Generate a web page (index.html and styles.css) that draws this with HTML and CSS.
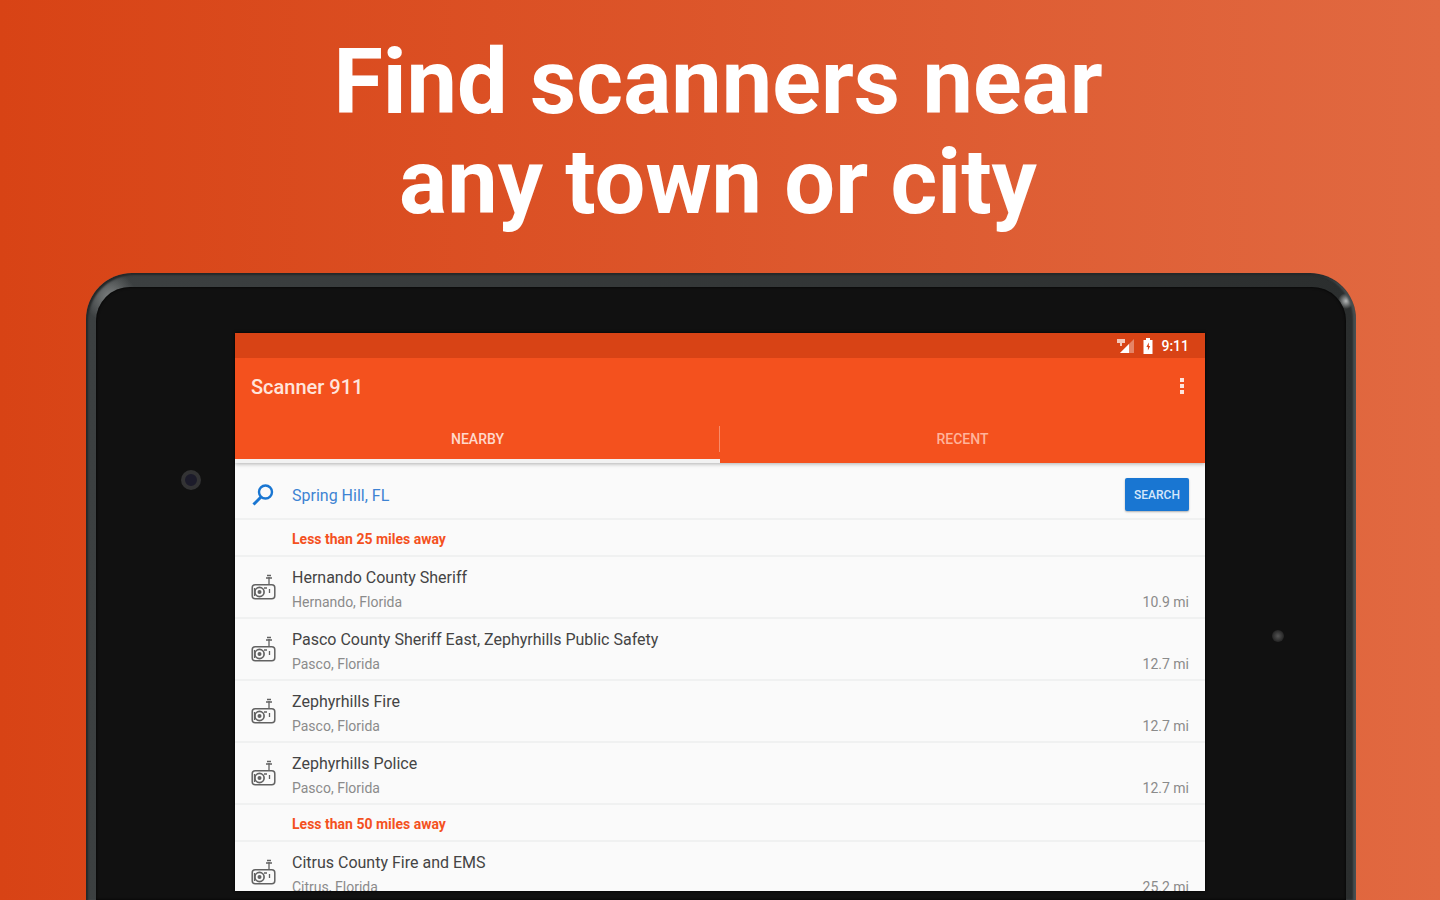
FILE: index.html
```html
<!DOCTYPE html>
<html lang="en">
<head>
  <meta charset="UTF-8" />
  <meta name="viewport" content="width=device-width, initial-scale=1" />
  <title>Scanner 911</title>
  <link rel="stylesheet" href="styles.css">
</head>
<body>
  <!-- shared radio icon -->
  <svg class="defs" aria-hidden="true">
    <symbol id="radio" viewBox="0 0 26 28">
      <path d="M18 10V3M15 4h6M16 1.500h4" fill="none" stroke="currentColor" stroke-width="1.3"/>
      <rect x="1.2" y="10.7" width="22.6" height="14" rx="3" fill="none" stroke="currentColor" stroke-width="1.5"/>
      <circle cx="8.500" cy="18" r="4.6" fill="none" stroke="currentColor" stroke-width="1.7"/>
      <circle cx="8.500" cy="18" r="2" fill="currentColor"/>
      <path d="M3.500 14v8M18.500 15v4M13 14h3" fill="none" stroke="currentColor" stroke-width="1.3"/>
    </symbol>
  </svg>

  <h1 class="headline">Find scanners near<br>any town or city</h1>

  <div class="tablet">
    <div class="glass">
      <div class="side side-left"><span class="camera"></span></div>

      <main class="screen">
        <header class="app-header">
          <div class="status-bar">
            <svg width="18" height="16" viewBox="0 0 18 16" aria-hidden="true">
              <path d="M0 1h8v4H5v3H3V5H0z" fill="#fff" opacity=".7"/>
              <path d="M17 1v14H3z" fill="#fff" opacity=".35"/>
              <path d="M12 6v9H3z" fill="#fff"/>
            </svg>
            <svg width="10" height="16" viewBox="0 0 10 16" aria-hidden="true">
              <path d="M3 0h4v2h2.500v14H.5V2H3z" fill="#fff"/>
              <path d="M5.800 4.500L3.400 9h1.500v3.500L7.200 8H5.800z" fill="#d84315"/>
            </svg>
            <span>9:11</span>
          </div>
          <div class="toolbar">
            <h2>Scanner 911</h2>
            <button class="menu-btn" aria-label="More options">
              <svg width="6" height="18" viewBox="0 0 6 18" aria-hidden="true">
                <path d="M1 0h4v4H1zM1 6h4v4H1zM1 12h4v4H1z" fill="#fff" opacity=".85"/>
              </svg>
            </button>
          </div>
          <nav class="tabs">
            <button class="tab active">NEARBY</button>
            <button class="tab">RECENT</button>
          </nav>
        </header>

        <form class="search">
          <label for="place" aria-label="Location">
            <svg width="24" height="24" viewBox="0 0 24 24" aria-hidden="true">
              <circle cx="14.500" cy="9" r="6.500" fill="none" stroke="#1976d2" stroke-width="2.400"/>
              <path d="M10 14l-7.500 7.500" stroke="#1976d2" stroke-width="3"/>
            </svg>
          </label>
          <input type="text" id="place" value="Spring Hill, FL" />
          <button type="button">SEARCH</button>
        </form>

        <section>
          <h3>Less than 25 miles away</h3>
          <ul>
            <li>
              <svg class="icon" aria-hidden="true"><use href="#radio"/></svg>
              <div class="info"><p class="name">Hernando County Sheriff</p><p>Hernando, Florida</p></div>
              <span class="distance">10.9 mi</span>
            </li>
            <li>
              <svg class="icon" aria-hidden="true"><use href="#radio"/></svg>
              <div class="info"><p class="name">Pasco County Sheriff East, Zephyrhills Public Safety</p><p>Pasco, Florida</p></div>
              <span class="distance">12.7 mi</span>
            </li>
            <li>
              <svg class="icon" aria-hidden="true"><use href="#radio"/></svg>
              <div class="info"><p class="name">Zephyrhills Fire</p><p>Pasco, Florida</p></div>
              <span class="distance">12.7 mi</span>
            </li>
            <li>
              <svg class="icon" aria-hidden="true"><use href="#radio"/></svg>
              <div class="info"><p class="name">Zephyrhills Police</p><p>Pasco, Florida</p></div>
              <span class="distance">12.7 mi</span>
            </li>
          </ul>
        </section>

        <section>
          <h3>Less than 50 miles away</h3>
          <ul>
            <li>
              <svg class="icon" aria-hidden="true"><use href="#radio"/></svg>
              <div class="info"><p class="name">Citrus County Fire and EMS</p><p>Citrus, Florida</p></div>
              <span class="distance">25.2 mi</span>
            </li>
          </ul>
        </section>
      </main>

      <div class="side side-right"><span class="sensor"></span></div>
    </div>
  </div>
</body>
</html>
```
FILE: styles.css
```css
* { box-sizing: border-box; }
body {
  margin: 0; height: 100vh; overflow: hidden;
  display: flex; flex-direction: column;
  font-family: Roboto, sans-serif;
  background: linear-gradient(to right, #d84315, #e16941);
}
h1, h2, h3, p, ul { margin: 0; padding: 0; }
ul { list-style: none; }
button, input { font-family: inherit; border: none; padding: 0; background: none; }
button { cursor: pointer; }
.defs { position: absolute; width: 0; height: 0; }

.headline {
  padding: 33px 4px 40px 0;
  color: white; text-align: center;
  font-size: 90px; line-height: 100px; font-weight: bold;
}

/* tablet frame */
.tablet {
  flex: 1; min-height: 0; display: flex;
  margin: 0 84px 0 86px; padding: 14px 10px 0;
  border-radius: 46px 46px 0 0;
  background:
    radial-gradient(circle at 24px 24px, #7d8080, transparent 26px),
    radial-gradient(circle at calc(100% - 10px) 28px, #b5b8b8, transparent 8px),
    linear-gradient(to right, #3c4041, #2b2e2e);
  box-shadow: inset 2px 2px 2px #232728, inset -3px 0 2px #484f51;
}
.glass {
  flex: 1; min-width: 0; display: flex;
  padding: 46px 0 9px;
  border-radius: 34px 34px 0 0;
  background: #111;
  box-shadow: inset 0 0 3px #000;
}
.side { flex: none; display: flex; justify-content: center; align-items: flex-start; }
.side-left { width: 139px; }
.side-right { width: 141px; }
.camera {
  width: 20px; height: 20px; margin: 137px 0 0 50px;
  border: 4px solid #333334; border-radius: 50%;
  background: #1c1b2a;
}
.sensor {
  width: 12px; height: 12px; margin: 297px 0 0 4px;
  border-radius: 50%;
  background: radial-gradient(#555, #111);
}

.screen {
  flex: 1; min-width: 0; overflow: hidden;
  background: #fafafa; box-shadow: 0 0 3px #000;
}
.app-header {
  position: relative;
  background: #f4511e; color: white;
  box-shadow: 0 1px 4px rgba(0,0,0,0.3);
}
.status-bar {
  height: 25px; padding: 0 16px;
  display: flex; justify-content: flex-end; align-items: center; gap: 8px;
  background: #d84315;
  font-size: 14px; font-weight: 500;
}
.toolbar {
  height: 58px; padding: 0 20px 0 16px;
  display: flex; justify-content: space-between; align-items: center;
}
.toolbar h2 { font-size: 20px; font-weight: 500; color: #ffe5dc; }
.menu-btn { display: flex; }
.tabs { display: flex; }
.tab {
  flex: 1; height: 47px; padding-top: 2px;
  border-bottom: 4px solid transparent;
  color: #ffb39b; font-size: 14px; font-weight: 500;
}
.tab.active {
  color: #ffd9cc; border-bottom-color: #f2f2f2;
  background: linear-gradient(#f98b69, #f98b69) right 10px / 1px 26px no-repeat;
}

.search {
  height: 57px; padding: 8px 16px 0;
  display: flex; align-items: center;
  border-bottom: 2px solid #f0f1f1;
}
.search label { width: 41px; display: flex; }
.search input { flex: 1; min-width: 0; padding-top: 2px; font-size: 16px; color: #3d83d3; }
.search button {
  width: 64px; height: 33px; border-radius: 2px;
  background: #1976d2; color: #d5e7fa;
  font-size: 12px; font-weight: 500;
  box-shadow: 0 1px 2px rgba(0,0,0,0.3);
}
h3 {
  height: 37px; padding-left: 57px;
  border-bottom: 2px solid #f0f1f1;
  color: #f4511e; font-size: 14px; line-height: 38px; font-weight: bold;
}
li {
  height: 62px; padding: 0 16px;
  display: flex; align-items: flex-end;
  border-bottom: 2px solid #f0f1f1;
}
.icon { width: 26px; height: 28px; margin: 0 15px 15px 0; color: #626262; }
.info { flex: 1; min-width: 0; padding-bottom: 3px; }
.info p, .distance { font-size: 14px; line-height: 24px; color: #8b8b8b; }
.info .name { font-size: 16px; color: #444; }
.distance { padding-bottom: 3px; }
```
